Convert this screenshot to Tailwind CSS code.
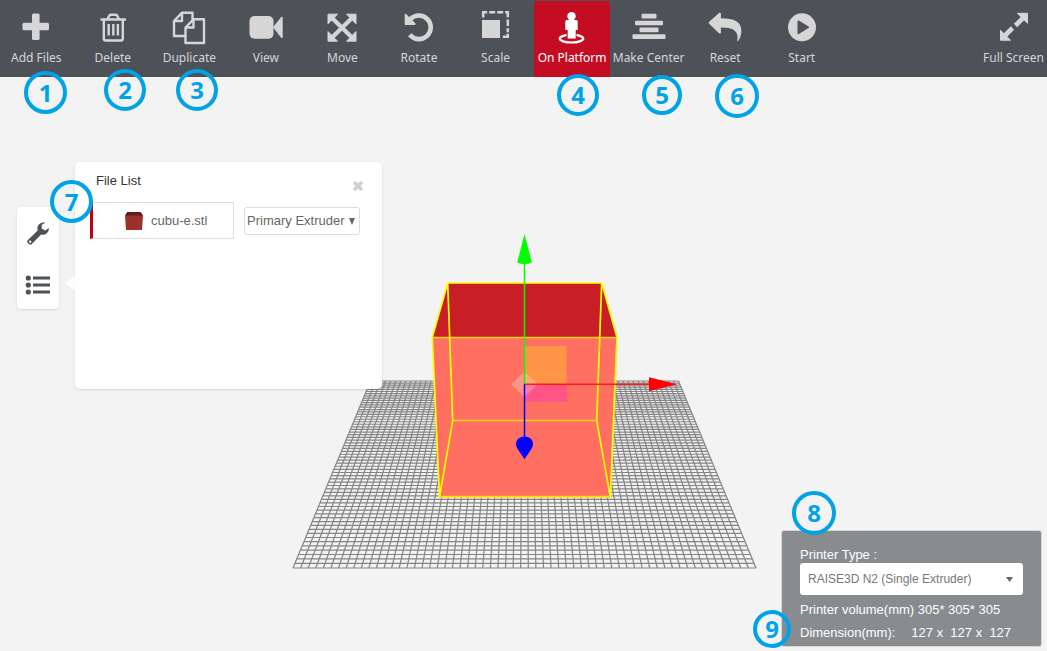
<!DOCTYPE html>
<html lang="en">
<head>
  <meta charset="UTF-8" />
  <meta name="viewport" content="width=device-width, initial-scale=1.0" />
  <title>Slicer - Platform View</title>
  <script src="https://cdn.jsdelivr.net/npm/@tailwindcss/browser@4"></script>
</head>
<body class="flex min-h-screen flex-col overflow-hidden bg-[#f3f3f3] font-['Liberation_Sans',Arial,sans-serif] text-[13px]">

  <!-- Toolbar -->
  <header class="flex h-[77px] justify-between bg-[#4d5158] font-['Noto_Sans','Open_Sans',sans-serif] text-[12px] leading-4 text-[#d6d6d6]">
    <nav class="-ml-0.5 grid w-[842px] grid-cols-11">
      <button class="flex flex-col items-center gap-[5px] whitespace-nowrap pt-[9px]">
        <svg class="size-9" viewBox="0 0 36 36" fill="currentColor"><rect x="4.5" y="13.7" width="26.5" height="7.6" rx="1.5"/><rect x="14" y="4.5" width="7.6" height="26.5" rx="1.5"/></svg>
        <span>Add Files</span>
      </button>
      <button class="flex flex-col items-center gap-[5px] whitespace-nowrap pt-[9px]">
        <svg class="size-9" viewBox="0 0 36 36" fill="none" stroke="currentColor" stroke-width="2.4"><path d="M5.5 10.500h25.500M12.500 10l2-3.600c.3-.5.6-.7 1.100-.7h5.300c.5 0 .8.2 1.100.7l2 3.600M8.800 11v18.500c0 1.200.8 2 2 2h15c1.200 0 2-.8 2-2V11M13.700 15v11.500M18.300 15v11.500M22.900 15v11.500"/></svg>
        <span>Delete</span>
      </button>
      <button class="flex flex-col items-center gap-[5px] whitespace-nowrap pt-[9px]">
        <svg class="size-9" viewBox="0 0 36 36" fill="none" stroke="currentColor" stroke-width="2.4" stroke-linejoin="round"><path d="M13.500 27H3V12l8-8.300h10.500v7M11 4v8H3M14.500 18.500l8-8.200h10.500V34H14.500zM22.500 10.500v8h-8"/></svg>
        <span>Duplicate</span>
      </button>
      <button class="flex flex-col items-center gap-[5px] whitespace-nowrap pt-[9px]">
        <svg class="size-9" viewBox="0 0 36 36" fill="currentColor"><rect x="1.500" y="7" width="24" height="22.700" rx="5"/><path d="M25 18.300l8.200-10.200c.6-.7 1.500-.4 1.500.4v19.800c0 .8-.9 1.100-1.500.4z"/></svg>
        <span>View</span>
      </button>
      <button class="flex flex-col items-center gap-[5px] whitespace-nowrap pt-[9px]">
        <svg class="size-9" viewBox="0 0 36 36" fill="currentColor" stroke="currentColor" stroke-linejoin="round"><path d="M8 9l20 19.500M28 9L8 28.500" stroke-width="4.200"/><path d="M4 5.200h9.500L4 14.800zM32 5.200v9.600l-9.500-9.600zM4 32.200v-9.600l9.500 9.600zM32 32.200h-9.500l9.500-9.600z"/></svg>
        <span>Move</span>
      </button>
      <button class="flex flex-col items-center gap-[5px] whitespace-nowrap pt-[9px]">
        <svg class="size-9" viewBox="0 0 36 36" fill="currentColor"><path d="M8.800 25.800A11.800 11.800 0 1 0 9.300 10.300" fill="none" stroke="currentColor" stroke-width="4.600"/><path d="M3.700 5.500c0-.8.900-1 1.400-.5l9.200 9.300c.7.700.3 1.700-.6 1.700H4.700c-.6 0-1-.4-1-1z"/></svg>
        <span>Rotate</span>
      </button>
      <button class="flex flex-col items-center gap-[5px] whitespace-nowrap pt-[9px]">
        <svg class="size-9" viewBox="0 0 36 36" fill="currentColor"><path d="M4 11h18v18H4z"/><path d="M5.200 8.500V3.200h4M11.200 3.200h6M19.200 3.200h6M27.200 3.200h2.600v5M29.800 10.500v6.500M29.800 19.300v4M29.800 24.800v2.900h-5" fill="none" stroke="currentColor" stroke-width="2.500"/></svg>
        <span>Scale</span>
      </button>
      <button class="mt-px flex flex-col items-center gap-[5px] whitespace-nowrap rounded-t-[3px] bg-[#c40d22] pt-2 text-white">
        <svg class="size-9" viewBox="0 0 36 36" fill="currentColor"><ellipse cx="17.500" cy="29.600" rx="11.800" ry="3.900" fill="none" stroke="currentColor" stroke-width="2.200"/><path d="M12.500 24h10v6h-10z" fill="#c40d22"/><circle cx="17.500" cy="7.200" r="4.200"/><path d="M13 11h9c1 0 1.700.7 1.700 1.700v8.300h-2v8.500h-8V21h-2.400v-8.300c0-1 .7-1.700 1.700-1.700z"/></svg>
        <span>On Platform</span>
      </button>
      <button class="flex flex-col items-center gap-[5px] whitespace-nowrap pt-[9px]">
        <svg class="size-9" viewBox="0 0 36 36" fill="currentColor"><rect x="10.500" y="4.700" width="15" height="4.800" rx="1"/><rect x="4" y="11.700" width="28" height="4.600" rx="1"/><rect x="8.500" y="18.400" width="19" height="4.800" rx="1"/><rect x="1.500" y="25.200" width="33" height="4.800" rx="1"/></svg>
        <span>Make Center</span>
      </button>
      <button class="flex flex-col items-center gap-[5px] whitespace-nowrap pt-[9px]">
        <svg class="size-9" viewBox="0 0 36 36" fill="currentColor"><path d="M1.900 12.900L12 4c.8-.7 1.900-.3 1.900.7V9.300c13 0 21 3.500 20.500 13.200-.2 3.700-1.500 6.900-3.200 9.600-.3.500-1 .3-.9-.3 1.500-9.500-3.300-13.500-16.400-13.300v5c0 1-1.100 1.400-1.900.7L1.900 14.500c-.5-.5-.5-1.100 0-1.600z"/></svg>
        <span>Reset</span>
      </button>
      <button class="flex flex-col items-center gap-[5px] whitespace-nowrap pt-[9px]">
        <svg class="size-9" viewBox="0 0 36 36" fill="currentColor"><path fill-rule="evenodd" d="M18 4.300a14 14 0 1 0 0 28 14 14 0 1 0 0-28zM13.500 12.300c0-.8.700-1.100 1.300-.7l9.800 6c.6.400.6 1 0 1.400l-9.800 6c-.6.400-1.300.1-1.300-.7z"/></svg>
        <span>Start</span>
      </button>
    </nav>
    <button class="flex flex-col items-center gap-[5px] whitespace-nowrap pr-[3px] pt-[9px]">
      <svg class="size-9" viewBox="0 0 36 36" fill="currentColor" stroke="currentColor" stroke-linejoin="round"><path d="M28 8l-8.500 8.500M16.500 19L8 27.500" stroke-width="4.600"/><path d="M21.500 4.300h10v10zM4.500 21.300v9.900h10z"/><path d="M15.500 15.500l5 5" stroke="#4d5158" stroke-width="1.400"/></svg>
      <span>Full Screen</span>
    </button>
  </header>

  <main class="relative flex-1">
    <!-- Build platform -->
    <svg class="absolute inset-0 h-full w-full" viewBox="0 77 1047 574" role="img" aria-label="Build platform with cube">
      <path id="plate" fill="none" stroke="#858585" stroke-width="1.200"/>
      <path d="M447.700 283h154L617 337.300H432.300z" fill="#c71f25"/>
      <path d="M432.300 337.300H617L610.300 497H439.500z" fill="#ff7062"/>
      <path d="M524.500 346h42v38.300h-42z" fill="#ff9548"/>
      <path d="M524.500 384.300h42l1 17.500h-43z" fill="#ff5486"/>
      <g fill="none" stroke="#ff0" stroke-width="1.700" stroke-linejoin="round">
        <path d="M447.700 283h154L617 337.300 610.300 497H439.500L432.300 337.300z"/>
        <path d="M447.700 283l5 137.700L439.500 497M601.700 283l-5 137.700 13.600 76.300"/>
        <path d="M432.300 337.500H617M452.700 420.500h144M439.500 496.500h170.800" stroke="#ffd21c"/>
      </g>
      <path d="M511 384.300l13.400-12.500 13.400 12.500-13.400 12.500z" fill="#fff" fill-opacity=".25"/>
      <path d="M524.500 262v122" stroke="#0f0" stroke-width="1.500"/>
      <path d="M524.500 234l7.300 28.500q-7.300 3.500-14.600 0z" fill="#0f0"/>
      <path d="M524.500 384.300H650" stroke="#ff1a1a" stroke-width="1.500"/>
      <path d="M677 384.300l-28 7v-14z" fill="red"/>
      <path d="M524.500 384.300V440" stroke="#00f" stroke-width="1.500"/>
      <path d="M524.500 459.300l-7.500-11.300c-3-6 1-11.500 7.500-11.500s10.500 5.500 7.500 11.500z" fill="#00f"/>
    </svg>

    <div class="absolute left-[17px] top-[85px] flex items-start gap-4">
      <!-- Side tabs -->
      <div class="mt-[45px] flex w-[42px] flex-col rounded bg-white text-[#4d5158] shadow">
        <button class="flex h-[54px] items-center justify-center" aria-label="Settings">
          <svg class="size-6" viewBox="0 0 24 24" fill="currentColor"><path fill-rule="evenodd" d="M22.800 5.900l-3.600 2.500-3.500-1.900.100-3.800 3.500-1.900c-3.300-1-7.600 1.200-7.900 5.200-.1.900 0 1.700.3 2.500L1.900 18c-.9.900-.9 2.100 0 3l.9.900c.8.800 2.100.8 3 0l9.300-9.500c4.300 1.200 8.200-2.200 7.700-6.500zM4.200 18.500a1.200 1.200 0 1 1 0 2.400 1.200 1.200 0 0 1 0-2.400z"/></svg>
        </button>
        <button class="flex h-12 items-center justify-center" aria-label="File list">
          <svg class="size-[26px]" viewBox="0 0 26 26" fill="currentColor"><circle cx="3.300" cy="6" r="2.600"/><circle cx="3.300" cy="13" r="2.600"/><circle cx="3.300" cy="20" r="2.600"/><path d="M8 4.500h17v3H8zM8 11.500h17v3H8zM8 18.500h17v3H8z"/></svg>
        </button>
      </div>

      <!-- File list panel -->
      <section class="relative h-[227px] w-[307px] rounded-[5px] bg-white px-[15px] pt-[9px] shadow">
        <svg class="absolute -left-[11px] top-[114px] h-[14px] w-[11px]" viewBox="0 0 11 14"><path d="M0 7L11 0v14z" fill="#fff" fill-opacity=".8"/></svg>
        <div class="flex h-[31px] items-start justify-between pl-[6px] pr-[3px]">
          <h2 class="leading-5 text-[#333]">File List</h2>
          <button class="mt-[9px]" aria-label="Close">
            <svg class="size-3" viewBox="0 0 12 12" stroke="#d0d0d0" stroke-width="3.600"><path d="M2 2l8 8M10 2l-8 8"/></svg>
          </button>
        </div>
        <div class="flex items-center gap-[10px]">
          <button class="flex h-[37px] w-36 items-center gap-2 border border-l-3 border-[#ddd] border-l-[#c1000f] pl-8 text-[#666]">
            <svg class="h-[18px] w-[18px]" viewBox="0 0 18 18"><path d="M2.500 0h13L18 3.500l-1 14.500H1L0 3.500z" fill="#9b312c"/><path d="M2.500 0h13L18 3.500H0z" fill="#641b18"/></svg>
            cubu-e.stl
          </button>
          <div class="relative">
            <select class="h-7 w-[116px] appearance-none rounded-[3px] border border-[#ddd] bg-white pl-0.5 text-[#666]" aria-label="Extruder">
              <option>Primary Extruder</option>
            </select>
            <svg class="pointer-events-none absolute right-[5px] top-[11px] h-[7px] w-[6px]" viewBox="0 0 6 7"><path d="M0 0h6L3 7z" fill="#666"/></svg>
          </div>
        </div>
      </section>
    </div>

    <!-- Printer info -->
    <section class="absolute bottom-1 right-[5px] h-[117px] w-[261px] rounded-[3px] border border-[#d5d6d7] bg-[#898c8e] px-[18px] pt-4 text-[13px] text-white">
      <label for="printer" class="block leading-4">Printer Type :</label>
      <div class="relative">
        <select id="printer" class="h-8 w-full appearance-none rounded-[3px] bg-white pl-2 text-[12px] text-[#777]">
          <option>RAISE3D N2 (Single Extruder)</option>
        </select>
        <svg class="pointer-events-none absolute right-[10px] top-[14px] h-[5px] w-[7px]" viewBox="0 0 7 5"><path d="M0 0h7L3.500 5z" fill="#666"/></svg>
      </div>
      <p class="mt-[7px] whitespace-nowrap leading-4">Printer volume(mm) 305* 305* 305</p>
      <p class="mt-[7px] flex gap-4 whitespace-pre leading-4"><span>Dimension(mm):</span><span>127 x  127 x  127</span></p>
    </section>
  </main>

  <!-- Callouts -->
  <div class="pointer-events-none font-['Open_Sans','Noto_Sans',sans-serif] text-[24px] font-bold leading-none text-[#00a2e8]">
    <span class="absolute left-[24px] top-[71px] flex size-[43px] items-center justify-center rounded-full border-4 border-[#00a2e8]">1</span>
    <span class="absolute left-[104px] top-[69px] flex size-[42px] items-center justify-center rounded-full border-4 border-[#00a2e8]">2</span>
    <span class="absolute left-[176px] top-[69px] flex size-[42px] items-center justify-center rounded-full border-4 border-[#00a2e8]">3</span>
    <span class="absolute left-[557px] top-[74px] flex size-[42px] items-center justify-center rounded-full border-4 border-[#00a2e8]">4</span>
    <span class="absolute left-[642px] top-[75px] flex size-[40px] items-center justify-center rounded-full border-4 border-[#00a2e8]">5</span>
    <span class="absolute left-[715px] top-[74px] flex size-[44px] items-center justify-center rounded-full border-4 border-[#00a2e8]">6</span>
    <span class="absolute left-[50px] top-[180px] flex size-[43px] items-center justify-center rounded-full border-4 border-[#00a2e8]">7</span>
    <span class="absolute bottom-[116px] right-[211px] flex size-[44px] items-center justify-center rounded-full border-4 border-[#00a2e8]">8</span>
    <span class="absolute bottom-[3px] right-[256px] flex size-[38px] items-center justify-center rounded-full border-4 border-[#00a2e8]">9</span>
  </div>

  <script>
    // build plate: 61 x 61 cells seen in perspective
    const cells = 61;
    const cx = 524.5;
    const front = { y: 568, half: 231.5 };
    const back = { y: 381, half: 154 };
    const ratio = front.half / back.half;
    let d = '';
    for (let i = 0; i <= cells; i++) {
      const t = i / cells;
      const w = 1 - t + t * ratio;
      const y = (front.y * (1 - t) + back.y * t * ratio) / w;
      const half = front.half / w;
      const u = 2 * t - 1;
      d += `M${cx - half} ${y}H${cx + half}`;
      d += `M${cx + u * front.half} ${front.y}L${cx + u * back.half} ${back.y}`;
    }
    document.getElementById('plate').setAttribute('d', d);
  </script>
</body>
</html>
